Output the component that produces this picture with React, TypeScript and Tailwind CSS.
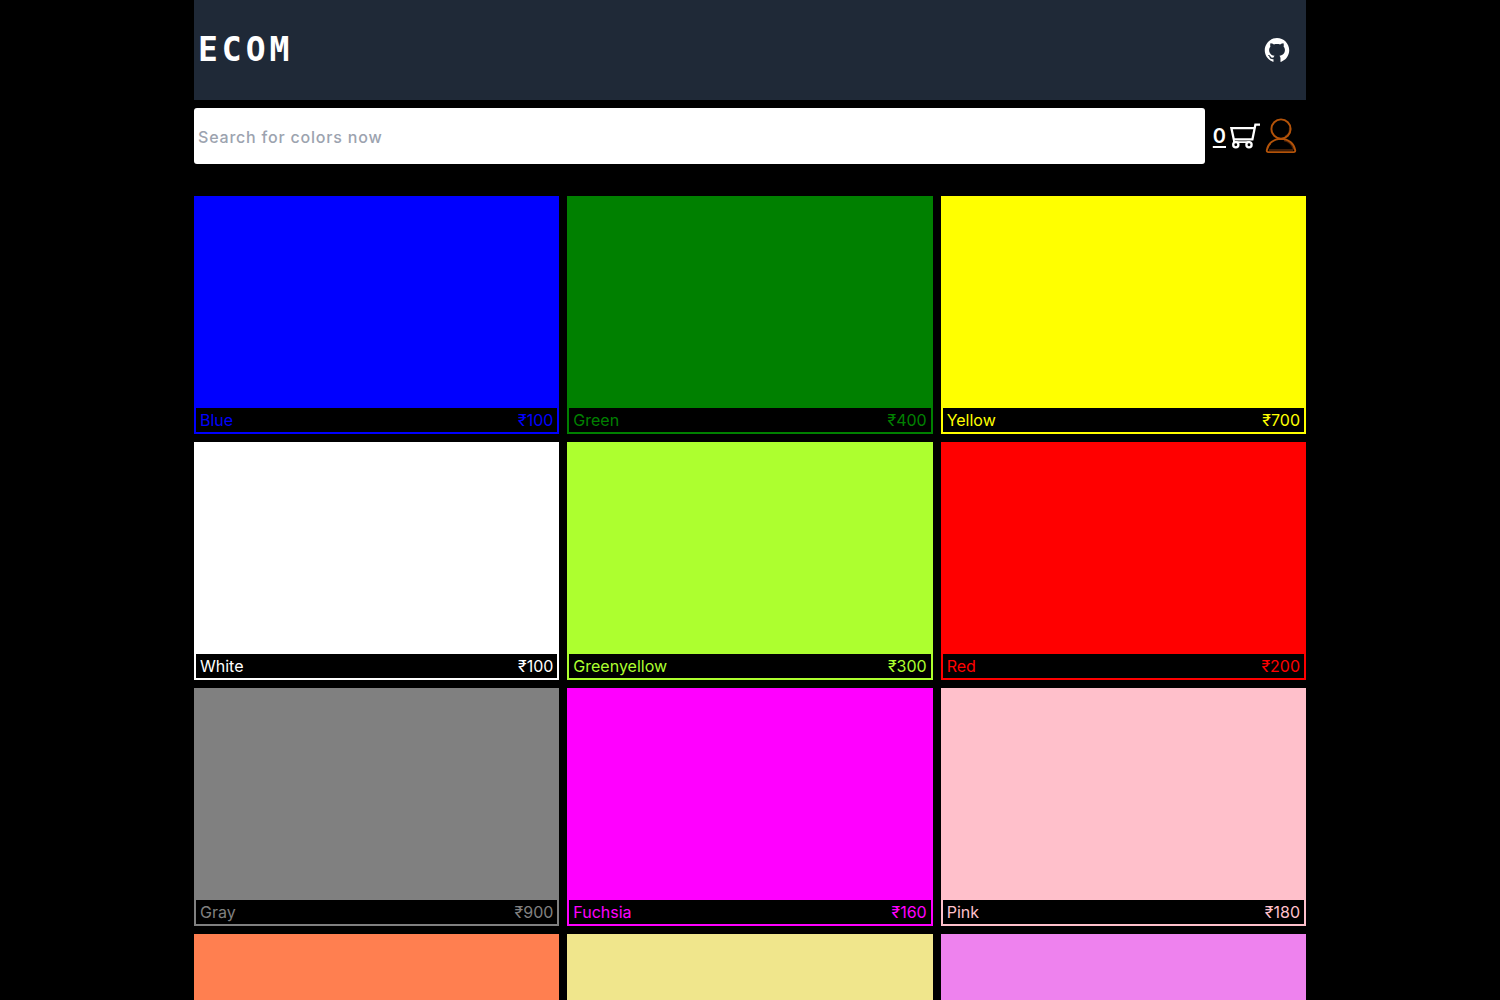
import React from "react";
import { AiFillGithub } from "react-icons/ai";

type Product = { name: string; price: number; color: string };

const products: Product[] = [
  { name: "Blue", price: 100, color: "blue" },
  { name: "Green", price: 400, color: "green" },
  { name: "Yellow", price: 700, color: "yellow" },
  { name: "White", price: 100, color: "white" },
  { name: "Greenyellow", price: 300, color: "greenyellow" },
  { name: "Red", price: 200, color: "red" },
  { name: "Gray", price: 900, color: "gray" },
  { name: "Fuchsia", price: 160, color: "fuchsia" },
  { name: "Pink", price: 180, color: "pink" },
  { name: "Coral", price: 250, color: "coral" },
  { name: "Khaki", price: 350, color: "khaki" },
  { name: "Violet", price: 450, color: "violet" },
];

function CartIcon() {
  return (
    <svg viewBox="0 0 32 32" className="size-8" fill="none" stroke="currentColor" strokeWidth="2.3" aria-hidden="true">
      <path d="M31 4.6h-4.6L23.4 19.4H4.8L2.4 8.2h23" />
      <path d="M4.9 19.4v2.8h15.6" strokeWidth="1.8" />
      <circle cx="6.8" cy="24.8" r="2.6" />
      <circle cx="20" cy="24.8" r="2.6" />
    </svg>
  );
}

function UserIcon() {
  return (
    <svg viewBox="0 0 32 36" className="h-9 w-8" fill="none" aria-hidden="true">
      <path d="M20 19.200a9 9 0 0 0 5-9.600" stroke="#4a2108" strokeWidth="2.4" />
      <path d="M19 22.400c5 .8 8.400 4.400 9.800 9" stroke="#4a2108" strokeWidth="1.6" />
      <path d="M4 32h24" stroke="#5a290a" strokeWidth="1.4" />
      <circle cx="16" cy="11" r="9.600" stroke="#b45309" strokeWidth="1.900" />
      <path d="M16 20.9C8.4 20.9 3 25.6 1.8 32.2c-.2 1.2.5 1.900 1.600 1.900h25.200c1.100 0 1.800-.7 1.600-1.900C29 25.600 23.600 20.900 16 20.900Z" stroke="#b45309" strokeWidth="1.900" />
    </svg>
  );
}

function ProductCard({ name, price, color }: Product) {
  return (
    <a href="#product" className="block border-2" style={{ borderColor: color, color }}>
      <div className="h-[210px]" style={{ backgroundColor: color }} />
      <div className="flex justify-between px-1">
        <span>{name}</span>
        <span>₹{price}</span>
      </div>
    </a>
  );
}

export default function App() {
  return (
    <div className="min-h-screen bg-black font-['Inter',sans-serif] text-white">
      <div className="mx-auto max-w-6xl px-5">
        <header className="flex h-[100px] items-center justify-between bg-[#1f2937] pr-[15px] pl-1">
          <a href="#home" className="font-['DejaVu_Sans_Mono',monospace] text-[33px] leading-10 font-bold tracking-[4px]">
            ECOM
          </a>
          <a href="#github" aria-label="GitHub">
            <AiFillGithub size={28} />
          </a>
        </header>
        <div className="mt-2 flex items-center gap-2">
          <input
            type="text"
            aria-label="Search for colors"
            placeholder="Search for colors now"
            className="h-14 min-w-0 flex-1 rounded-[3px] bg-white px-1 pt-0.5 font-medium tracking-wider text-black placeholder:text-[#9ca3af]"
          />
          <div className="flex items-center gap-1 pr-[9px]">
            <a href="#cart" className="flex items-center gap-[3px]" aria-label="Cart, 0 items">
              <span className="text-xl font-semibold underline underline-offset-[3px]">0</span>
              <CartIcon />
            </a>
            <a href="#account" aria-label="Account">
              <UserIcon />
            </a>
          </div>
        </div>
        <main className="mt-8 grid grid-cols-3 gap-2">
          {products.map((p) => (
            <ProductCard key={p.name} {...p} />
          ))}
        </main>
      </div>
    </div>
  );
}
